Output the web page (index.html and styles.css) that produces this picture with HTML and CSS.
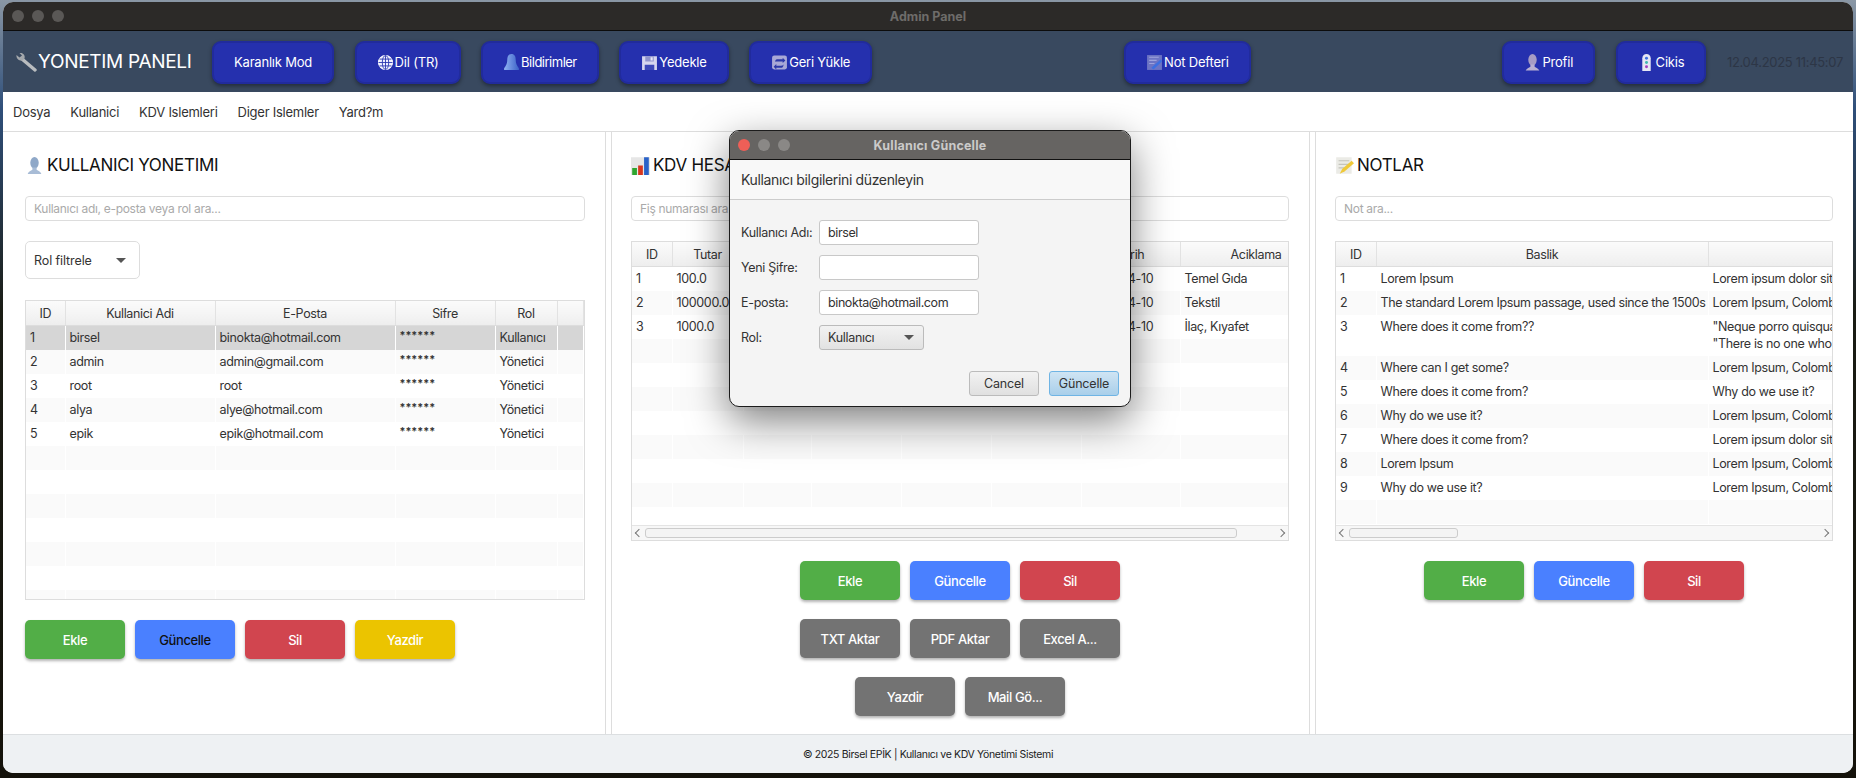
FILE: index.html
```html
<!DOCTYPE html>
<html lang="tr">
<head>
    <meta charset="UTF-8">
    <title>Admin Panel</title>
    <link rel="stylesheet" href="styles.css">
</head>
<body>
<div class="window">
    <div class="titlebar">
        <div class="lights"><i></i><i></i><i></i></div>
        <span class="win-title">Admin Panel</span>
    </div>

    <header class="topbar">
        <div class="brand">
            <svg class="ico-brand" viewBox="0 0 24 20"><path d="M22 18 9 7" stroke="#b9bcbf" stroke-width="3.4" stroke-linecap="round" fill="none"/><path d="M9.5 8.5C6 9 3 6.5 3.5 3L6.5 5.5 9 3.5 6.5 1C10 .3 12.5 3 11.5 6.5Z" fill="#a4a8ac"/></svg>
            <span>YONETIM PANELI</span>
        </div>
        <button class="nav-btn">Karanlık Mod</button>
        <button class="nav-btn">
            <svg class="ico" viewBox="0 0 16 16"><circle cx="8" cy="8" r="6.6" fill="#eef" stroke="#fff"/><g fill="none" stroke="#2430ae" stroke-width=".8"><ellipse cx="8" cy="8" rx="3" ry="6.6"/><path d="M8 1.4v13.2M1.4 8h13.2M2.4 4.8h11.2M2.4 11.2h11.2"/></g></svg>
            Dil (TR)
        </button>
        <button class="nav-btn tight">
            <svg class="ico" viewBox="0 0 16 18"><defs><linearGradient id="bell" x1="0" x2="1"><stop offset="0" stop-color="#8fb2f2"/><stop offset="1" stop-color="#3c62c8"/></linearGradient></defs><path d="M8 1C5 1 4 3.5 4 6.5 4 10 3 12 1 14.5V16h14v-1.5C13 12 12 10 12 6.5 12 3.5 11 1 8 1Z" fill="url(#bell)"/></svg>
            Bildirimler
        </button>
        <button class="nav-btn">
            <svg class="ico" viewBox="0 0 16 16"><path d="M1 2h14v13H1Z" fill="#d6d6ee"/><path d="M4 2h8v5H4Z" fill="#8f93cc"/><path d="M9 3h2v3H9Z" fill="#e8e8f6"/><path d="M3.500 10h9v5h-9Z" fill="#3c48b8"/></svg>
            Yedekle
        </button>
        <button class="nav-btn">
            <svg class="ico" viewBox="0 0 16 16"><rect x="1" y="1.500" width="14" height="13" rx="2" fill="#a9a8d6"/><path d="M4 7c0-1.500 1-2 2.500-2H11V3.500L13.500 6 11 8.500V7H6C5 7 4.500 7.500 4 7ZM12 9c0 1.500-1 2-2.500 2H5V9.500L2.500 12 5 14.500V13h5c1 0 2-2 2-4Z" fill="#2c38a8"/></svg>
            Geri Yükle
        </button>
        <div class="spacer"></div>
        <button class="nav-btn">
            <svg class="ico" viewBox="0 0 16 16"><rect x="1" y="1" width="14" height="14" fill="#6d74c4"/><path d="M3 3h9M3 6h7M3 9h5" stroke="#9ea3dc" stroke-width="1"/><path d="M5 13 14 5l1 2-8 7.500Z" fill="#3d6fe0"/></svg>
            Not Defteri
        </button>
        <div class="spacer"></div>
        <button class="nav-btn">
            <svg class="ico" viewBox="0 0 16 18"><ellipse cx="8" cy="6.500" rx="4" ry="5.500" fill="#a79cc4"/><path d="M6 11h4v2c1.500 1 3.500 1.500 4.500 3.500h-13C2.500 14.500 4.500 14 6 13Z" fill="#b9b0d2"/></svg>
            Profil
        </button>
        <button class="nav-btn">
            <svg class="ico" viewBox="0 0 16 18"><path d="M4 17V5c0-2.500 2-4 4-4s4 1.500 4 4v12Z" fill="#e6e6f4"/><circle cx="8" cy="5" r="1.400" fill="#3d6fe0"/><circle cx="8" cy="9" r="1.400" fill="#3fb8b0"/><circle cx="8" cy="13" r="1.400" fill="#a040c0"/></svg>
            Cikis
        </button>
        <span class="clock">12.04.2025 11:45:07</span>
    </header>

    <nav class="menubar">
        <span>Dosya</span>
        <span>Kullanici</span>
        <span>KDV Islemleri</span>
        <span>Diger Islemler</span>
        <span>Yard?m</span>
    </nav>

    <main class="panels">
        <section class="panel panel-users">
            <h2 class="panel-title">
                <svg class="ico-title" viewBox="0 0 16 18"><ellipse cx="8" cy="6.500" rx="4" ry="5.500" fill="#8fa8c8"/><path d="M6 11h4v2c1.500 1 3.500 1.500 4.500 4h-13C2.500 14.500 4.500 14 6 13Z" fill="#a8bcd6"/></svg>
                KULLANICI YONETIMI
            </h2>
            <input class="search" type="text" placeholder="Kullanıcı adı, e-posta veya rol ara...">
            <div class="role-filter">Rol filtrele<i class="caret"></i></div>
            <div class="table-box box-users">
                <div class="table-scroll">
                    <table class="grid">
                        <colgroup><col class="w39"><col class="w150"><col class="w180"><col class="w100"><col class="w62"><col></colgroup>
                        <thead><tr><th>ID</th><th>Kullanici Adi</th><th>E-Posta</th><th>Sifre</th><th>Rol</th><th></th></tr></thead>
                        <tbody>
                            <tr class="selected"><td>1</td><td>birsel</td><td>binokta@hotmail.com</td><td class="stars">******</td><td>Kullanıcı</td><td></td></tr>
                            <tr><td>2</td><td>admin</td><td>admin@gmail.com</td><td class="stars">******</td><td>Yönetici</td><td></td></tr>
                            <tr><td>3</td><td>root</td><td>root</td><td class="stars">******</td><td>Yönetici</td><td></td></tr>
                            <tr><td>4</td><td>alya</td><td>alye@hotmail.com</td><td class="stars">******</td><td>Yönetici</td><td></td></tr>
                            <tr><td>5</td><td>epik</td><td>epik@hotmail.com</td><td class="stars">******</td><td>Yönetici</td><td></td></tr>
                            <tr><td></td><td></td><td></td><td></td><td></td><td></td></tr>
                            <tr><td></td><td></td><td></td><td></td><td></td><td></td></tr>
                            <tr><td></td><td></td><td></td><td></td><td></td><td></td></tr>
                            <tr><td></td><td></td><td></td><td></td><td></td><td></td></tr>
                            <tr><td></td><td></td><td></td><td></td><td></td><td></td></tr>
                            <tr><td></td><td></td><td></td><td></td><td></td><td></td></tr>
                            <tr><td></td><td></td><td></td><td></td><td></td><td></td></tr>
                        </tbody>
                    </table>
                </div>
            </div>
            <div class="actions actions-left">
                <button class="act green">Ekle</button>
                <button class="act blue dark-text">Güncelle</button>
                <button class="act red">Sil</button>
                <button class="act yellow">Yazdir</button>
            </div>
        </section>

        <section class="panel panel-kdv">
            <h2 class="panel-title">
                <svg class="ico-title" viewBox="0 0 16 16"><path d="M0 1h16v15H0Z" fill="#e6e6e6"/><path d="M1 10h4v6H1Z" fill="#2fa52f"/><path d="M6 8h4v8H6Z" fill="#d8371f"/><path d="M11 1h4v15h-4Z" fill="#2a62c8"/></svg>
                KDV HESAPLAMA
            </h2>
            <input class="search" type="text" placeholder="Fiş numarası ara...">
            <div class="table-box">
                <div class="table-scroll">
                    <table class="grid grid-kdv">
                        <colgroup><col class="w40"><col class="w71"><col class="w68"><col class="w90"><col class="w90"><col class="w90"><col class="w99"><col class="w152"></colgroup>
                        <thead><tr><th>ID</th><th>Tutar</th><th>KDV</th><th>KDV Tutari</th><th>Toplam</th><th>Fis No</th><th>Tarih</th><th>Aciklama</th></tr></thead>
                        <tbody>
                            <tr><td>1</td><td>100.0</td><td>18.0</td><td>18.0</td><td>118.0</td><td>1</td><td>2025-04-10</td><td>Temel Gıda</td></tr>
                            <tr><td>2</td><td>100000.0</td><td>20.0</td><td>20000.0</td><td>120000.0</td><td>2</td><td>2025-04-10</td><td>Tekstil</td></tr>
                            <tr><td>3</td><td>1000.0</td><td>8.0</td><td>80.0</td><td>1080.0</td><td>3</td><td>2025-04-10</td><td>İlaç, Kıyafet</td></tr>
                            <tr><td></td><td></td><td></td><td></td><td></td><td></td><td></td><td></td></tr>
                            <tr><td></td><td></td><td></td><td></td><td></td><td></td><td></td><td></td></tr>
                            <tr><td></td><td></td><td></td><td></td><td></td><td></td><td></td><td></td></tr>
                            <tr><td></td><td></td><td></td><td></td><td></td><td></td><td></td><td></td></tr>
                            <tr><td></td><td></td><td></td><td></td><td></td><td></td><td></td><td></td></tr>
                            <tr><td></td><td></td><td></td><td></td><td></td><td></td><td></td><td></td></tr>
                            <tr><td></td><td></td><td></td><td></td><td></td><td></td><td></td><td></td></tr>
                            <tr><td></td><td></td><td></td><td></td><td></td><td></td><td></td><td></td></tr>
                        </tbody>
                    </table>
                </div>
                <div class="scrollbar">
                    <i class="chev chev-left"></i>
                    <div class="thumb thumb-kdv"></div>
                    <i class="chev chev-right"></i>
                </div>
            </div>
            <div class="actions">
                <button class="act green">Ekle</button>
                <button class="act blue">Güncelle</button>
                <button class="act red">Sil</button>
            </div>
            <div class="actions">
                <button class="act gray">TXT Aktar</button>
                <button class="act gray">PDF Aktar</button>
                <button class="act gray">Excel A...</button>
            </div>
            <div class="actions">
                <button class="act gray">Yazdir</button>
                <button class="act gray">Mail Gö...</button>
            </div>
        </section>

        <section class="panel panel-notes">
            <h2 class="panel-title">
                <svg class="ico-title" viewBox="0 0 16 16"><path d="M1 1h13v14H1Z" fill="#ebebe6"/><path d="M3 4h9M3 7h9M3 10h5" stroke="#c4c4bc"/><path d="M4 15l2-4 8-7 2 2-8 7Z" fill="#efc93a"/></svg>
                NOTLAR
            </h2>
            <input class="search" type="text" placeholder="Not ara...">
            <div class="table-box">
                <div class="table-scroll">
                    <table class="grid grid-notes">
                        <colgroup><col class="w40"><col class="w332"><col class="w1000"></colgroup>
                        <thead><tr><th>ID</th><th>Baslik</th><th>Icerik</th></tr></thead>
                        <tbody>
                            <tr><td>1</td><td>Lorem Ipsum</td><td>Lorem ipsum dolor sit amet, consectetur</td></tr>
                            <tr><td>2</td><td>The standard Lorem Ipsum passage, used since the 1500s</td><td>Lorem Ipsum, Colombia</td></tr>
                            <tr class="tall"><td>3</td><td>Where does it come from??</td><td>"Neque porro quisquam est<br>"There is no one who loves pain</td></tr>
                            <tr><td>4</td><td>Where can I get some?</td><td>Lorem Ipsum, Colombia</td></tr>
                            <tr><td>5</td><td>Where does it come from?</td><td>Why do we use it?</td></tr>
                            <tr><td>6</td><td>Why do we use it?</td><td>Lorem Ipsum, Colombia</td></tr>
                            <tr><td>7</td><td>Where does it come from?</td><td>Lorem ipsum dolor sit amet, consectetur</td></tr>
                            <tr><td>8</td><td>Lorem Ipsum</td><td>Lorem Ipsum, Colombia</td></tr>
                            <tr><td>9</td><td>Why do we use it?</td><td>Lorem Ipsum, Colombia</td></tr>
                            <tr><td></td><td></td><td></td></tr>
                        </tbody>
                    </table>
                </div>
                <div class="scrollbar">
                    <i class="chev chev-left"></i>
                    <div class="thumb thumb-notes"></div>
                    <i class="chev chev-right"></i>
                </div>
            </div>
            <div class="actions">
                <button class="act green">Ekle</button>
                <button class="act blue">Güncelle</button>
                <button class="act red">Sil</button>
            </div>
        </section>
    </main>

    <footer class="footer">© 2025 Birsel EPİK | Kullanıcı ve KDV Yönetimi Sistemi</footer>

    <div class="dialog">
        <div class="dialog-bar">
            <div class="lights"><i class="close"></i><i></i><i></i></div>
            <span class="dialog-title">Kullanıcı Güncelle</span>
        </div>
        <div class="dialog-head">Kullanıcı bilgilerini düzenleyin</div>
        <div class="dialog-form">
            <label>Kullanıcı Adı:</label><input class="field" type="text" value="birsel">
            <label>Yeni Şifre:</label><input class="field" type="password">
            <label>E-posta:</label><input class="field" type="text" value="binokta@hotmail.com">
            <label>Rol:</label><div class="role-select">Kullanıcı<i class="caret"></i></div>
        </div>
        <div class="dialog-actions">
            <button class="dlg-btn">Cancel</button>
            <button class="dlg-btn primary">Güncelle</button>
        </div>
    </div>
</div>
</body>
</html>
```

FILE: styles.css
```css
html, body {
    margin: 0;
    height: 100%;
    overflow: hidden;
}
body {
    font-family: 'Inter', 'Liberation Sans', sans-serif;
    background: linear-gradient(180deg, #8a97a5 0%, #2f4f7a 14%, #1a1c14 40%, #14120a 100%);
}
.window {
    position: relative;
    display: flex;
    flex-direction: column;
    width: 1850px;
    height: 771px;
    margin: 2px 0 0 3px;
    border-radius: 10px;
    overflow: hidden;
    background: #fff;
}
.titlebar {
    position: relative;
    display: flex;
    align-items: center;
    justify-content: center;
    flex: 0 0 28px;
    background: #2c2a28;
    border-bottom: 1px solid #0c0c0c;
}
.lights {
    position: absolute;
    left: 9px;
    top: 8px;
    display: flex;
    gap: 8px;
}
.lights i {
    width: 12px;
    height: 12px;
    border-radius: 50%;
    background: #5a5856;
}
.win-title {
    font-size: 12.500px;
    font-weight: 700;
    color: #6e6c6a;
}

/* top bar */
.topbar {
    display: flex;
    align-items: center;
    flex: 0 0 61px;
    padding: 0 10px;
    background: #39495f;
    color: #fff;
    box-sizing: border-box;
}
.brand {
    display: flex;
    align-items: center;
    gap: 1px;
    width: 199px;
    font-size: 19px;
    letter-spacing: -.3px;
}
.ico-brand {
    width: 24px;
    height: 20px;
}
.nav-btn {
    display: flex;
    align-items: center;
    justify-content: center;
    gap: 1px;
    height: 43px;
    margin-right: 20.500px;
    padding: 0 20px;
    margin-top: 1px;
    border: 2px solid #212b9c;
    border-radius: 9px;
    background: #2530ae;
    box-shadow: 0 2px 4px rgba(0,0,0,.4);
    color: #fff;
    font-family: inherit;
    font-size: 13px;
    letter-spacing: -.2px;
    white-space: nowrap;
}
.nav-btn.tight {
    letter-spacing: -.5px;
}
.ico {
    width: 17px;
    height: 19px;
}
.spacer {
    flex: 1;
}
.clock {
    font-size: 13px;
    letter-spacing: -.3px;
    color: #2d3646;
    white-space: nowrap;
}

.menubar {
    display: flex;
    align-items: center;
    gap: 20px;
    flex: 0 0 39px;
    padding: 0 10px;
    border-bottom: 1px solid #ddd;
    font-size: 13px;
    letter-spacing: -.25px;
    color: #333;
}

/* three columns */
.panels {
    display: flex;
    flex: 1;
    min-height: 0;
}
.panel {
    flex: 0 0 auto;
    box-sizing: border-box;
    min-width: 0;
    padding: 20px 20px 0;
    border-right: 1px solid #ddd;
}
.panel-users {
    width: 603px;
    padding-left: 22px;
}
.panel-kdv {
    width: 699px;
    margin-left: 5px;
    padding-left: 19px;
    border-left: 1px solid #ddd;
}
.panel-notes {
    flex: 1 1 0;
    margin-left: 5px;
    padding-left: 19px;
    border-left: 1px solid #ddd;
    border-right: 0;
}
.panel-title {
    display: flex;
    align-items: center;
    gap: 3px;
    height: 26px;
    margin: 0 0 18px;
    font-size: 17px;
    font-weight: 400;
    letter-spacing: -.3px;
    color: #111;
}
.ico-title {
    width: 19px;
    height: 19px;
}
.search {
    display: block;
    box-sizing: border-box;
    width: 100%;
    height: 25px;
    padding: 0 8px;
    border: 1px solid #ddd;
    border-radius: 4px;
    font-family: inherit;
    font-size: 12px;
    letter-spacing: -.3px;
}
.search::placeholder {
    color: #aaa;
}
.role-filter {
    display: flex;
    align-items: center;
    justify-content: space-between;
    box-sizing: border-box;
    width: 115px;
    height: 38px;
    margin-top: 20px;
    padding: 0 13px 0 8px;
    border: 1px solid #ddd;
    border-radius: 5px;
    font-size: 12.500px;
    letter-spacing: -.1px;
    color: #333;
}
.caret {
    width: 0;
    height: 0;
    border-left: 5px solid transparent;
    border-right: 5px solid transparent;
    border-top: 5px solid #555;
}

/* tables */
.table-box {
    display: flex;
    flex-direction: column;
    box-sizing: border-box;
    height: 300px;
    margin-top: 20px;
    border: 1px solid #ddd;
}
.box-users {
    margin-top: 21px;
}
.table-scroll {
    flex: 1;
    min-height: 0;
    overflow: hidden;
}
.grid {
    table-layout: fixed;
    width: 100%;
    border-collapse: collapse;
    font-size: 12.500px;
    letter-spacing: -.35px;
    color: #333;
}
.grid-kdv {
    width: 700px;
}
.grid-notes {
    width: 1372px;
}
.w39 { width: 39px; }
.w40 { width: 40px; }
.w62 { width: 62px; }
.w68 { width: 68px; }
.w71 { width: 71px; }
.w90 { width: 90px; }
.w99 { width: 99px; }
.w100 { width: 100px; }
.w150 { width: 150px; }
.w152 { width: 152px; }
.w180 { width: 180px; }
.w332 { width: 332px; }
.w1000 { width: 1000px; }
.grid th {
    height: 24px;
    padding: 0;
    border-right: 1px solid #e2e2e2;
    border-bottom: 1px solid #ddd;
    background: linear-gradient(180deg, #fbfbfb, #eeeeee);
    font-weight: 400;
    text-align: center;
}
.grid td {
    box-sizing: border-box;
    height: 24px;
    padding: 0 4px 1px;
    border-right: 1px solid #fff;
    white-space: nowrap;
    overflow: hidden;
}
.grid tbody tr:nth-child(even) {
    background: #fafafa;
}
.grid tbody tr.selected {
    background: #d6d6d6;
}
.grid tr.tall td {
    height: 41px;
    padding-top: 3px;
    line-height: 17px;
    vertical-align: top;
}
.grid td.stars {
    padding-bottom: 5px;
    font-size: 11px;
    font-weight: 600;
    letter-spacing: 0;
}
.scrollbar {
    display: flex;
    align-items: center;
    flex: 0 0 14px;
    border-top: 1px solid #e4e4e4;
    background: #f7f7f7;
}
.thumb {
    box-sizing: border-box;
    height: 10px;
    border: 1px solid #ccc;
    border-radius: 3px;
    background: #f4f4f4;
}
.thumb-kdv { width: 592px; }
.thumb-notes { width: 109px; }
.chev {
    flex: 0 0 auto;
    box-sizing: border-box;
    width: 6px;
    height: 6px;
    border-left: 1px solid #777;
    border-bottom: 1px solid #777;
}
.chev-left {
    margin: 0 3px 0 4px;
    transform: rotate(45deg);
}
.chev-right {
    margin-left: auto;
    margin-right: 4px;
    transform: rotate(225deg);
}

/* action buttons */
.actions {
    display: flex;
    justify-content: center;
    gap: 10px;
    margin-top: 19px;
}
.actions-left {
    justify-content: flex-start;
}
.table-box + .actions {
    margin-top: 20px;
}
.act {
    width: 100px;
    height: 39px;
    border: 0;
    border-radius: 5px;
    box-shadow: 0 2px 3px rgba(0,0,0,.3);
    color: #fff;
    font-family: inherit;
    font-size: 13px;
    font-weight: 500;
    letter-spacing: -.4px;
}
.green { background: #52ae47; }
.blue { background: #4a80ff; }
.red { background: #d1454f; }
.yellow { background: #ebc400; }
.gray { background: #737373; }
.dark-text { color: #111; }

.footer {
    display: flex;
    align-items: center;
    justify-content: center;
    flex: 0 0 38px;
    border-top: 1px solid #dcdfe1;
    background: #eef1f3;
    font-size: 10.500px;
    letter-spacing: -.35px;
    color: #222;
}

/* update dialog */
.dialog {
    position: absolute;
    left: 726px;
    top: 128px;
    box-sizing: border-box;
    width: 402px;
    height: 277px;
    border: 1px solid #1c1c1c;
    border-radius: 10px;
    overflow: hidden;
    background: #f4f4f4;
    box-shadow: 0 14px 40px rgba(0,0,0,.5);
}
.dialog-bar {
    position: relative;
    display: flex;
    align-items: center;
    justify-content: center;
    height: 28px;
    background: #666462;
    border-bottom: 1px solid #111;
}
.dialog-bar .lights {
    left: 8px;
    top: 8px;
}
.dialog-bar .lights i {
    background: #8a8886;
}
.dialog-bar .lights i.close {
    background: #ee5f57;
}
.dialog-title {
    font-size: 12.500px;
    font-weight: 700;
    letter-spacing: .2px;
    color: #cbcac9;
}
.dialog-head {
    box-sizing: border-box;
    height: 40px;
    padding: 0 11px;
    line-height: 39px;
    background: #f8f8f8;
    border-bottom: 1px solid #ccc;
    font-size: 14px;
    letter-spacing: -.35px;
    color: #333;
}
.dialog-form {
    display: grid;
    grid-template-columns: 78px 160px;
    grid-auto-rows: 25px;
    row-gap: 10px;
    align-items: center;
    margin: 20px 0 0 11px;
    font-size: 12.500px;
    letter-spacing: -.3px;
    color: #333;
}
.field {
    box-sizing: border-box;
    width: 160px;
    height: 25px;
    padding: 0 8px;
    border: 1px solid #c8c8c8;
    border-radius: 3px;
    background: #fff;
    font-family: inherit;
    font-size: 12.500px;
    letter-spacing: -.4px;
    color: #333;
}
.role-select {
    display: flex;
    align-items: center;
    justify-content: space-between;
    box-sizing: border-box;
    width: 105px;
    height: 25px;
    padding: 0 9px 0 8px;
    border: 1px solid #bbb;
    border-radius: 3px;
    background: linear-gradient(180deg, #f2f2f2, #e2e2e2);
}
.dialog-actions {
    display: flex;
    justify-content: flex-end;
    gap: 10px;
    margin: 21px 11px 0 0;
}
.dlg-btn {
    width: 70px;
    height: 25px;
    padding: 0;
    border: 1px solid #bbb;
    border-radius: 3px;
    background: linear-gradient(180deg, #f2f2f2, #e0e0e0);
    font-family: inherit;
    font-size: 12.500px;
    letter-spacing: -.2px;
    color: #333;
}
.dlg-btn.primary {
    border-color: #6fb4e4;
    background: linear-gradient(180deg, #cfe4f3, #a9cfea);
}
```
